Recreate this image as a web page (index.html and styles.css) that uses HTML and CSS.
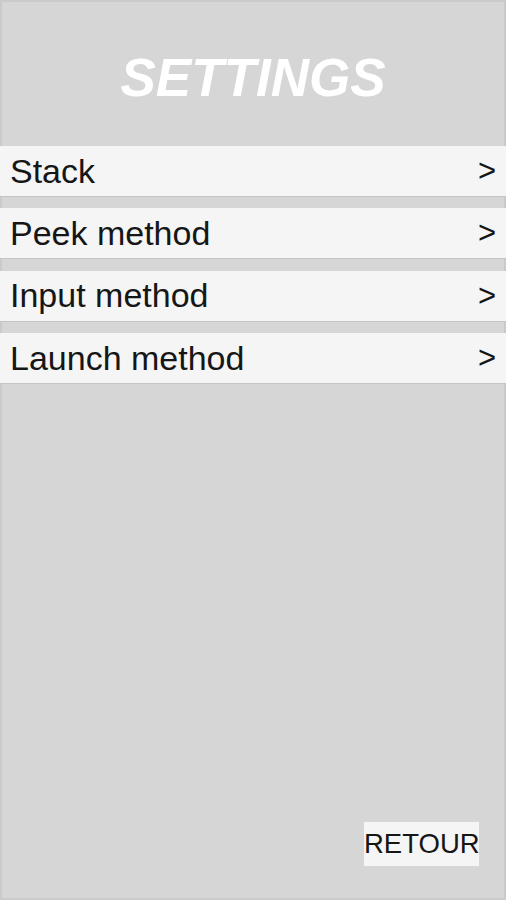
FILE: index.html
```html
<!DOCTYPE html>
<html>
<head>
<meta charset="utf-8">
<link rel="stylesheet" href="styles.css">
</head>
<body>
<div class="screen">
  <h1 class="title">SETTINGS</h1>
  <div class="menu">
    <div class="row"><span>Stack</span><span class="chev">&gt;</span></div>
    <div class="row"><span>Peek method</span><span class="chev">&gt;</span></div>
    <div class="row"><span>Input method</span><span class="chev">&gt;</span></div>
    <div class="row"><span>Launch method</span><span class="chev">&gt;</span></div>
  </div>
  <div class="footer">
    <div class="retour">RETOUR</div>
  </div>
</div>
</body>
</html>
```

FILE: styles.css
```css
html, body {
  margin: 0;
  padding: 0;
}
body {
  width: 506px;
  height: 900px;
  overflow: hidden;
  font-family: "Liberation Sans", Arial, sans-serif;
}
.screen {
  box-sizing: border-box;
  width: 506px;
  height: 900px;
  background: #d6d6d6;
  border: 2px solid #cacaca;
  display: flex;
  flex-direction: column;
}
.title {
  margin: 0;
  height: 144px;
  box-sizing: border-box;
  padding-top: 46px;
  text-align: center;
  color: #ffffff;
  font-size: 53px;
  font-weight: bold;
  font-style: italic;
  line-height: 60px;
}
.menu {
  display: flex;
  flex-direction: column;
  gap: 11.4px;
  margin: 0 -2px;
}
.row {
  height: 50px;
  background: #f5f5f5;
  border-bottom: 1px solid #c4c4c4;
  display: flex;
  align-items: center;
  justify-content: space-between;
  padding: 0 10px 0 10px;
  font-size: 34px;
  color: #161616;
}
.chev {
  font-size: 31px;
}
.footer {
  flex: 1;
  display: flex;
  justify-content: flex-end;
  align-items: flex-end;
  padding: 0 25px 32px 0;
}
.retour {
  width: 115px;
  height: 44px;
  background: #f5f5f5;
  color: #161616;
  font-size: 27.5px;
  line-height: 44px;
  text-align: center;
  white-space: nowrap;
  overflow: visible;
}
```
